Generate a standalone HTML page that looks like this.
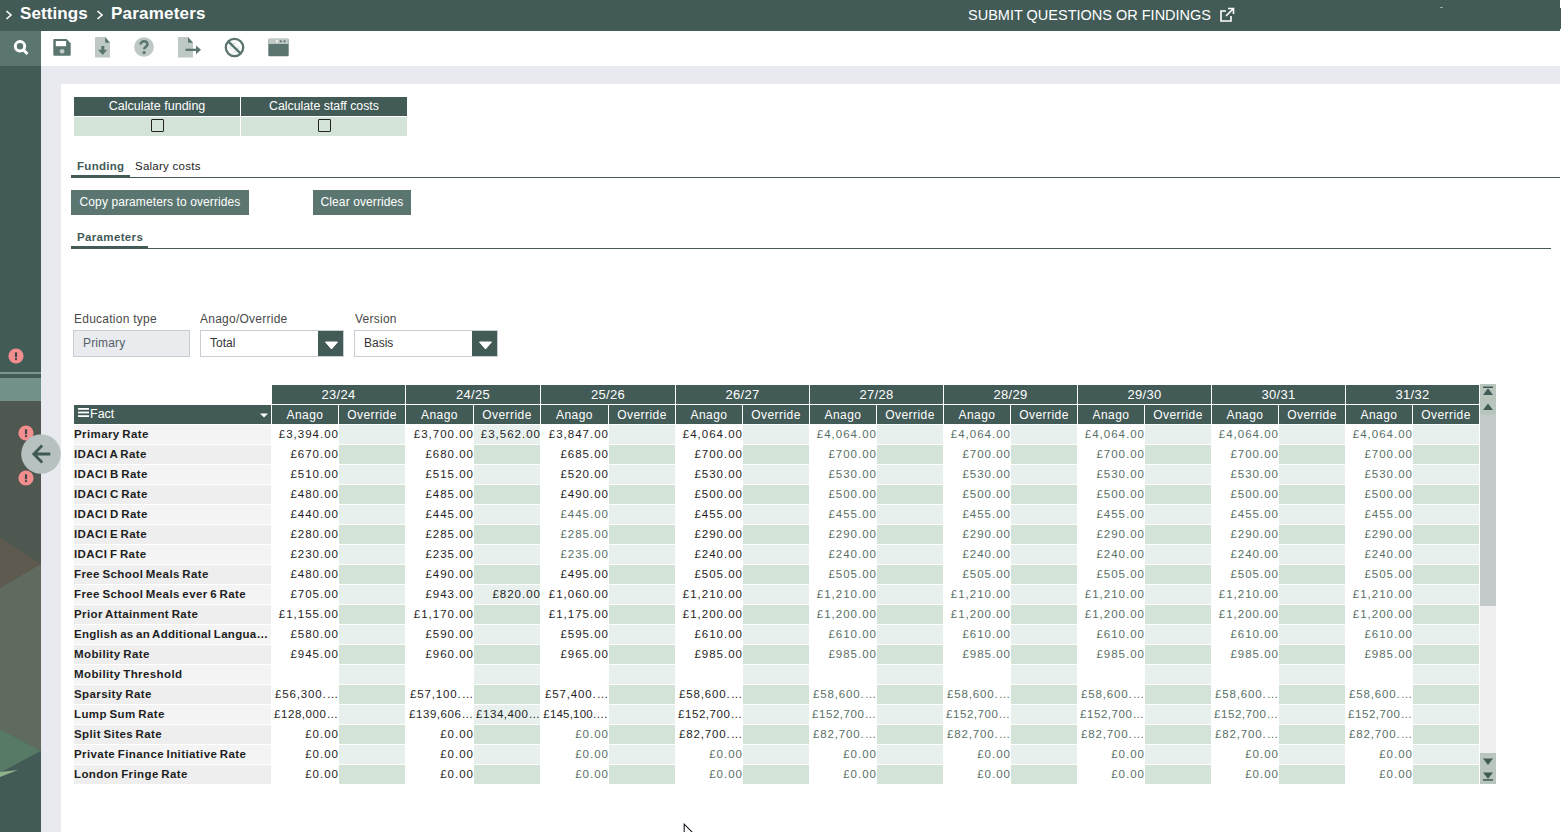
<!DOCTYPE html>
<html><head><meta charset="utf-8"><style>
html,body{margin:0;padding:0;}
body{width:1561px;height:832px;overflow:hidden;position:relative;background:#fff;font-family:"Liberation Sans",sans-serif;}
.abs{position:absolute;}
.hy{position:absolute;left:0;right:0;top:2px;text-align:center;color:#fff;font-size:13px;letter-spacing:0.3px;}
.hs{position:absolute;left:0;right:0;top:3px;text-align:center;color:#fff;font-size:12px;letter-spacing:0.45px;}
.fact{position:absolute;left:0;top:0;right:0;bottom:0;color:#fff;font-size:12.5px;}
.lbl{position:absolute;left:0px;top:3px;font-size:11.5px;letter-spacing:0.4px;word-spacing:-1px;font-weight:bold;color:#1e1e1e;white-space:nowrap;}
.num{position:absolute;right:-1px;top:3px;font-size:11.5px;letter-spacing:1px;white-space:nowrap;}
.btn{position:absolute;background:#5b7670;color:#fff;font-size:12px;text-align:center;line-height:25px;letter-spacing:0.1px;}
.lab{position:absolute;color:#4a4a4a;font-size:12px;letter-spacing:0.25px;}
</style></head><body>
<!-- header -->
<div class="abs" style="left:0;top:0;width:1560px;height:31px;background:#435b57;"></div>
<div class="abs" style="left:1560px;top:8px;width:1px;height:21px;background:#435b57;"></div>
<svg class="abs" style="left:5px;top:10px" width="8" height="10" viewBox="0 0 8 10"><path d="M1.5 1L6 5L1.5 9" stroke="#fff" stroke-width="1.6" fill="none"/></svg>
<div class="abs" style="left:20px;top:4px;color:#fff;font-size:17px;font-weight:bold;letter-spacing:0.1px;">Settings</div>
<svg class="abs" style="left:96px;top:10px" width="8" height="10" viewBox="0 0 8 10"><path d="M1.5 1L6 5L1.5 9" stroke="#fff" stroke-width="1.6" fill="none"/></svg>
<div class="abs" style="left:111px;top:4px;color:#fff;font-size:17px;font-weight:bold;letter-spacing:0.2px;">Parameters</div>
<div class="abs" style="left:968px;top:7px;color:#fff;font-size:14.5px;">SUBMIT QUESTIONS OR FINDINGS</div>
<svg class="abs" style="left:1219px;top:7px" width="16" height="16" viewBox="0 0 16 16"><path d="M12 9v5H2V4h5" stroke="#fff" stroke-width="1.6" fill="none"/><path d="M9 1.5h5.5V7M14.5 1.5L7 9" stroke="#fff" stroke-width="1.6" fill="none"/></svg>
<div class="abs" style="left:1440px;top:7px;width:3px;height:1px;background:#9aa8a5;"></div>

<!-- toolbar -->
<div class="abs" style="left:0;top:31px;width:41px;height:35px;background:#5b7670;"></div>
<svg class="abs" style="left:10px;top:37px" width="22" height="22" viewBox="0 0 22 22"><circle cx="10" cy="9.3" r="4.7" stroke="#fff" stroke-width="3" fill="none"/><path d="M13.5 13L17.5 17" stroke="#fff" stroke-width="3"/></svg>
<!-- save -->
<svg class="abs" style="left:53px;top:39px" width="18" height="17" viewBox="0 0 18 17"><path d="M0.3 1.2Q0.3 0.1 1.3 0.1H13.5L17.7 4.2V15.8Q17.7 16.8 16.7 16.8H1.3Q0.3 16.8 0.3 15.8Z" fill="#5b7670"/><rect x="2.8" y="2" width="10.3" height="5.2" fill="#fff"/><circle cx="9.1" cy="12.3" r="2.4" fill="#bec8c5"/></svg>
<!-- download doc -->
<svg class="abs" style="left:95px;top:37px" width="15" height="21" viewBox="0 0 15 21"><path d="M0 1Q0 0 1 0H10.2L15 5.8V19.5Q15 20.4 14 20.4H1Q0 20.4 0 19.5Z" fill="#bec8c5"/><path d="M10.2 0V5.8H15Z" fill="#5b7670"/><rect x="6.3" y="9" width="3" height="4.5" fill="#5b7670"/><path d="M3 12.8H12.2L7.7 18Z" fill="#5b7670"/></svg>
<!-- help -->
<svg class="abs" style="left:134px;top:37px" width="20" height="20" viewBox="0 0 20 20"><circle cx="10" cy="10" r="9.8" fill="#bec8c5"/><path d="M6.6 7.6C6.6 5.4 8.2 4.3 10.1 4.3C12.2 4.3 13.5 5.6 13.5 7.3C13.5 9.6 10.2 9.8 10.2 12.3" stroke="#5b7670" stroke-width="2.6" fill="none"/><circle cx="10.1" cy="15.6" r="1.6" fill="#5b7670"/></svg>
<!-- export doc -->
<svg class="abs" style="left:178px;top:37px" width="24" height="21" viewBox="0 0 24 21"><path d="M0 1Q0 0 1 0H10L15 5.7V19.6Q15 20.6 14 20.6H1Q0 20.6 0 19.6Z" fill="#bec8c5"/><path d="M10 0V5.7H15Z" fill="#5b7670"/><rect x="7.5" y="11.7" width="11" height="2.3" fill="#5b7670"/><path d="M18 8.6L23 12.85L18 17.3Z" fill="#5b7670"/></svg>
<!-- cancel -->
<svg class="abs" style="left:224px;top:37px" width="21" height="21" viewBox="0 0 21 21"><circle cx="10.5" cy="10.5" r="8.7" stroke="#5b7670" stroke-width="2.3" fill="#fff"/><path d="M12 5.5L10.5 7L9 5.5M9 15.5L10.5 14L12 15.5M13 8.5L15 10.5L13 12.5M8 8.5L6 10.5L8 12.5" stroke="#c9d1ce" stroke-width="1" fill="none"/><path d="M4.8 4.8L16.2 16.2" stroke="#5b7670" stroke-width="2.5"/></svg>
<!-- window -->
<svg class="abs" style="left:268px;top:38px" width="21" height="19" viewBox="0 0 21 19"><rect x="0.3" y="0.8" width="20.4" height="17.4" rx="1.2" fill="#5b7670"/><path d="M0.3 2Q0.3 0.8 1.5 0.8H19.5Q20.7 0.8 20.7 2V6H0.3Z" fill="#bec8c5"/><circle cx="9" cy="3.3" r="1.1" fill="#fff"/><circle cx="12.8" cy="3.3" r="1.1" fill="#5b7670"/><circle cx="16.6" cy="3.3" r="1.1" fill="#5b7670"/></svg>

<!-- gray bands -->
<div class="abs" style="left:41px;top:66px;width:1519px;height:18px;background:#e9eaef;"></div>
<div class="abs" style="left:41px;top:66px;width:20px;height:766px;background:#e9eaef;"></div>

<!-- sidebar -->
<svg class="abs" style="left:0;top:66px" width="41" height="766" viewBox="0 66 41 766">
<rect x="0" y="66" width="41" height="306" fill="#435b57"/>
<rect x="0" y="372" width="41" height="2" fill="#7b9993"/>
<rect x="0" y="374" width="41" height="4" fill="#435b57"/>
<rect x="0" y="378" width="41" height="23" fill="#72918b"/>
<rect x="0" y="401" width="41" height="431" fill="#4f5850"/>
<path d="M0 538L41 564L0 588Z" fill="#5e5a4f"/>
<path d="M0 588L41 564L41 751L0 729Z" fill="#606a5f"/>
<path d="M0 729L41 751L0 773Z" fill="#577a67"/>
<path d="M0 773L41 751L41 832L0 832Z" fill="#435b57"/>
<path d="M0 772L18 770L0 777Z" fill="#8fb08d"/>
</svg>
<svg class="abs" style="left:8px;top:348.4px" width="16" height="16" viewBox="0 0 16 16"><circle cx="8" cy="8" r="7.6" fill="#f38e8e"/><rect x="6.9" y="4.2" width="2.2" height="5" rx="0.5" fill="#3f4a48"/><circle cx="8" cy="11.2" r="1.15" fill="#3f4a48"/></svg>
<svg class="abs" style="left:18.4px;top:424.9px" width="16" height="16" viewBox="0 0 16 16"><circle cx="8" cy="8" r="7.6" fill="#f38e8e"/><rect x="6.9" y="4.2" width="2.2" height="5" rx="0.5" fill="#3f4a48"/><circle cx="8" cy="11.2" r="1.15" fill="#3f4a48"/></svg>
<svg class="abs" style="left:18.4px;top:469.8px" width="16" height="16" viewBox="0 0 16 16"><circle cx="8" cy="8" r="7.6" fill="#f38e8e"/><rect x="6.9" y="4.2" width="2.2" height="5" rx="0.5" fill="#3f4a48"/><circle cx="8" cy="11.2" r="1.15" fill="#3f4a48"/></svg>
<svg class="abs" style="left:21px;top:434px" width="40" height="40" viewBox="0 0 40 40"><circle cx="20" cy="20" r="19.8" fill="#b6c1c0"/><path d="M13 20H29.3M21.2 11.6L12.8 20L21.2 28.4" stroke="#3f5a55" stroke-width="2.8" fill="none"/></svg>

<!-- calc table -->
<div class="abs" style="left:74px;top:97px;width:166px;height:19px;background:#435b57;color:#fff;font-size:12.5px;text-align:center;line-height:19px;">Calculate funding</div>
<div class="abs" style="left:241px;top:97px;width:166px;height:19px;background:#435b57;color:#fff;font-size:12.3px;text-align:center;line-height:19px;">Calculate staff costs</div>
<div class="abs" style="left:74px;top:117px;width:166px;height:19px;background:#d3e3d8;"></div>
<div class="abs" style="left:241px;top:117px;width:166px;height:19px;background:#d3e3d8;"></div>
<div class="abs" style="left:151px;top:119px;width:11px;height:11px;border:1px solid #222;border-radius:1px;"></div>
<div class="abs" style="left:318px;top:119px;width:11px;height:11px;border:1px solid #222;border-radius:1px;"></div>

<!-- tabs -->
<div class="abs" style="left:77px;top:160px;color:#435b57;font-size:11.5px;letter-spacing:0.3px;font-weight:bold;">Funding</div>
<div class="abs" style="left:135px;top:160px;color:#222;font-size:11.5px;letter-spacing:0.25px;">Salary costs</div>
<div class="abs" style="left:71px;top:177px;width:1489px;height:1px;background:#435b57;"></div>
<div class="abs" style="left:71px;top:175px;width:59px;height:3px;background:#435b57;"></div>

<div class="btn" style="left:71px;top:190px;width:178px;height:25px;">Copy parameters to overrides</div>
<div class="btn" style="left:313px;top:190px;width:98px;height:25px;">Clear overrides</div>

<div class="abs" style="left:77px;top:231px;color:#435b57;font-size:11.5px;letter-spacing:0.35px;font-weight:bold;">Parameters</div>
<div class="abs" style="left:71px;top:248px;width:1480px;height:1px;background:#435b57;"></div>
<div class="abs" style="left:71px;top:246px;width:77px;height:3px;background:#435b57;"></div>

<!-- filters -->
<div class="lab" style="left:74px;top:312px;">Education type</div>
<div class="lab" style="left:200px;top:312px;">Anago/Override</div>
<div class="lab" style="left:355px;top:312px;">Version</div>
<div class="abs" style="left:73px;top:330px;width:115px;height:25px;background:#e9ebee;border:1px solid #c8ccd3;"></div>
<div class="abs" style="left:83px;top:336px;color:#565e68;font-size:12px;letter-spacing:0.15px;">Primary</div>
<div class="abs" style="left:200px;top:330px;width:142px;height:25px;background:#fff;border:1px solid #c8ccd3;"></div>
<div class="abs" style="left:318px;top:331px;width:25px;height:25px;background:#435b57;"></div>
<svg class="abs" style="left:325px;top:340.5px" width="13" height="9" viewBox="0 0 13 9"><path d="M0.5 1H12.5L6.5 8Z" fill="#fff" stroke="#fff" stroke-linejoin="round"/></svg>
<div class="abs" style="left:210px;top:336px;color:#333;font-size:12px;">Total</div>
<div class="abs" style="left:354px;top:330px;width:142px;height:25px;background:#fff;border:1px solid #c8ccd3;"></div>
<div class="abs" style="left:472px;top:331px;width:25px;height:25px;background:#435b57;"></div>
<svg class="abs" style="left:479px;top:340.5px" width="13" height="9" viewBox="0 0 13 9"><path d="M0.5 1H12.5L6.5 8Z" fill="#fff" stroke="#fff" stroke-linejoin="round"/></svg>
<div class="abs" style="left:364px;top:336px;color:#333;font-size:12px;">Basis</div>

<!-- table -->
<div style="position:absolute;left:272px;top:385px;width:133px;height:19px;background:#435b57;"><span class="hy">23/24</span></div>
<div style="position:absolute;left:272px;top:405px;width:66px;height:19px;background:#435b57;"><span class="hs">Anago</span></div>
<div style="position:absolute;left:339px;top:405px;width:66px;height:19px;background:#435b57;"><span class="hs">Override</span></div>
<div style="position:absolute;left:406px;top:385px;width:134px;height:19px;background:#435b57;"><span class="hy">24/25</span></div>
<div style="position:absolute;left:406px;top:405px;width:67px;height:19px;background:#435b57;"><span class="hs">Anago</span></div>
<div style="position:absolute;left:474px;top:405px;width:66px;height:19px;background:#435b57;"><span class="hs">Override</span></div>
<div style="position:absolute;left:541px;top:385px;width:134px;height:19px;background:#435b57;"><span class="hy">25/26</span></div>
<div style="position:absolute;left:541px;top:405px;width:67px;height:19px;background:#435b57;"><span class="hs">Anago</span></div>
<div style="position:absolute;left:609px;top:405px;width:66px;height:19px;background:#435b57;"><span class="hs">Override</span></div>
<div style="position:absolute;left:676px;top:385px;width:133px;height:19px;background:#435b57;"><span class="hy">26/27</span></div>
<div style="position:absolute;left:676px;top:405px;width:66px;height:19px;background:#435b57;"><span class="hs">Anago</span></div>
<div style="position:absolute;left:743px;top:405px;width:66px;height:19px;background:#435b57;"><span class="hs">Override</span></div>
<div style="position:absolute;left:810px;top:385px;width:133px;height:19px;background:#435b57;"><span class="hy">27/28</span></div>
<div style="position:absolute;left:810px;top:405px;width:66px;height:19px;background:#435b57;"><span class="hs">Anago</span></div>
<div style="position:absolute;left:877px;top:405px;width:66px;height:19px;background:#435b57;"><span class="hs">Override</span></div>
<div style="position:absolute;left:944px;top:385px;width:133px;height:19px;background:#435b57;"><span class="hy">28/29</span></div>
<div style="position:absolute;left:944px;top:405px;width:66px;height:19px;background:#435b57;"><span class="hs">Anago</span></div>
<div style="position:absolute;left:1011px;top:405px;width:66px;height:19px;background:#435b57;"><span class="hs">Override</span></div>
<div style="position:absolute;left:1078px;top:385px;width:133px;height:19px;background:#435b57;"><span class="hy">29/30</span></div>
<div style="position:absolute;left:1078px;top:405px;width:66px;height:19px;background:#435b57;"><span class="hs">Anago</span></div>
<div style="position:absolute;left:1145px;top:405px;width:66px;height:19px;background:#435b57;"><span class="hs">Override</span></div>
<div style="position:absolute;left:1212px;top:385px;width:133px;height:19px;background:#435b57;"><span class="hy">30/31</span></div>
<div style="position:absolute;left:1212px;top:405px;width:66px;height:19px;background:#435b57;"><span class="hs">Anago</span></div>
<div style="position:absolute;left:1279px;top:405px;width:66px;height:19px;background:#435b57;"><span class="hs">Override</span></div>
<div style="position:absolute;left:1346px;top:385px;width:133px;height:19px;background:#435b57;"><span class="hy">31/32</span></div>
<div style="position:absolute;left:1346px;top:405px;width:66px;height:19px;background:#435b57;"><span class="hs">Anago</span></div>
<div style="position:absolute;left:1413px;top:405px;width:66px;height:19px;background:#435b57;"><span class="hs">Override</span></div>
<div style="position:absolute;left:74px;top:405px;width:197px;height:19px;background:#435b57;"><span class="fact"><svg width="11" height="10" viewBox="0 0 11 10" style="position:absolute;left:4px;top:3.4px"><rect x="0" y="0" width="11" height="1.8" fill="#fff"/><rect x="0" y="3.6" width="11" height="1.8" fill="#fff"/><rect x="0" y="7.2" width="11" height="1.8" fill="#fff"/></svg><span style="position:absolute;left:16px;top:2px">Fact</span><svg width="8" height="5" viewBox="0 0 8 5" style="position:absolute;left:186px;top:8px"><path d="M0 0.5H8L4 4.5Z" fill="#fff"/></svg></span></div>
<div style="position:absolute;left:74px;top:425px;width:197px;height:19px;background:#f4f4f4;"><span class="lbl" style="">Primary Rate</span></div>
<div style="position:absolute;left:272px;top:425px;width:66px;height:19px;"><span class="num" style="color:#1e1e1e;">£3,394.00</span></div>
<div style="position:absolute;left:339px;top:425px;width:66px;height:19px;background:#e7f0ec;"><span class="num" style="color:#1e1e1e;"></span></div>
<div style="position:absolute;left:406px;top:425px;width:67px;height:19px;"><span class="num" style="color:#1e1e1e;">£3,700.00</span></div>
<div style="position:absolute;left:474px;top:425px;width:66px;height:19px;background:#e7f0ec;"><span class="num" style="color:#1e1e1e;">£3,562.00</span></div>
<div style="position:absolute;left:541px;top:425px;width:67px;height:19px;"><span class="num" style="color:#1e1e1e;">£3,847.00</span></div>
<div style="position:absolute;left:609px;top:425px;width:66px;height:19px;background:#e7f0ec;"><span class="num" style="color:#1e1e1e;"></span></div>
<div style="position:absolute;left:676px;top:425px;width:66px;height:19px;"><span class="num" style="color:#1e1e1e;">£4,064.00</span></div>
<div style="position:absolute;left:743px;top:425px;width:66px;height:19px;background:#e7f0ec;"><span class="num" style="color:#1e1e1e;"></span></div>
<div style="position:absolute;left:810px;top:425px;width:66px;height:19px;"><span class="num" style="color:#587066;">£4,064.00</span></div>
<div style="position:absolute;left:877px;top:425px;width:66px;height:19px;background:#e7f0ec;"><span class="num" style="color:#1e1e1e;"></span></div>
<div style="position:absolute;left:944px;top:425px;width:66px;height:19px;"><span class="num" style="color:#587066;">£4,064.00</span></div>
<div style="position:absolute;left:1011px;top:425px;width:66px;height:19px;background:#e7f0ec;"><span class="num" style="color:#1e1e1e;"></span></div>
<div style="position:absolute;left:1078px;top:425px;width:66px;height:19px;"><span class="num" style="color:#587066;">£4,064.00</span></div>
<div style="position:absolute;left:1145px;top:425px;width:66px;height:19px;background:#e7f0ec;"><span class="num" style="color:#1e1e1e;"></span></div>
<div style="position:absolute;left:1212px;top:425px;width:66px;height:19px;"><span class="num" style="color:#587066;">£4,064.00</span></div>
<div style="position:absolute;left:1279px;top:425px;width:66px;height:19px;background:#e7f0ec;"><span class="num" style="color:#1e1e1e;"></span></div>
<div style="position:absolute;left:1346px;top:425px;width:66px;height:19px;"><span class="num" style="color:#587066;">£4,064.00</span></div>
<div style="position:absolute;left:1413px;top:425px;width:66px;height:19px;background:#e7f0ec;"><span class="num" style="color:#1e1e1e;"></span></div>
<div style="position:absolute;left:74px;top:445px;width:197px;height:19px;background:#eeeeee;"><span class="lbl" style="">IDACI A Rate</span></div>
<div style="position:absolute;left:272px;top:445px;width:66px;height:19px;"><span class="num" style="color:#1e1e1e;">£670.00</span></div>
<div style="position:absolute;left:339px;top:445px;width:66px;height:19px;background:#d3e3d8;"><span class="num" style="color:#1e1e1e;"></span></div>
<div style="position:absolute;left:406px;top:445px;width:67px;height:19px;"><span class="num" style="color:#1e1e1e;">£680.00</span></div>
<div style="position:absolute;left:474px;top:445px;width:66px;height:19px;background:#d3e3d8;"><span class="num" style="color:#1e1e1e;"></span></div>
<div style="position:absolute;left:541px;top:445px;width:67px;height:19px;"><span class="num" style="color:#1e1e1e;">£685.00</span></div>
<div style="position:absolute;left:609px;top:445px;width:66px;height:19px;background:#d3e3d8;"><span class="num" style="color:#1e1e1e;"></span></div>
<div style="position:absolute;left:676px;top:445px;width:66px;height:19px;"><span class="num" style="color:#1e1e1e;">£700.00</span></div>
<div style="position:absolute;left:743px;top:445px;width:66px;height:19px;background:#d3e3d8;"><span class="num" style="color:#1e1e1e;"></span></div>
<div style="position:absolute;left:810px;top:445px;width:66px;height:19px;"><span class="num" style="color:#587066;">£700.00</span></div>
<div style="position:absolute;left:877px;top:445px;width:66px;height:19px;background:#d3e3d8;"><span class="num" style="color:#1e1e1e;"></span></div>
<div style="position:absolute;left:944px;top:445px;width:66px;height:19px;"><span class="num" style="color:#587066;">£700.00</span></div>
<div style="position:absolute;left:1011px;top:445px;width:66px;height:19px;background:#d3e3d8;"><span class="num" style="color:#1e1e1e;"></span></div>
<div style="position:absolute;left:1078px;top:445px;width:66px;height:19px;"><span class="num" style="color:#587066;">£700.00</span></div>
<div style="position:absolute;left:1145px;top:445px;width:66px;height:19px;background:#d3e3d8;"><span class="num" style="color:#1e1e1e;"></span></div>
<div style="position:absolute;left:1212px;top:445px;width:66px;height:19px;"><span class="num" style="color:#587066;">£700.00</span></div>
<div style="position:absolute;left:1279px;top:445px;width:66px;height:19px;background:#d3e3d8;"><span class="num" style="color:#1e1e1e;"></span></div>
<div style="position:absolute;left:1346px;top:445px;width:66px;height:19px;"><span class="num" style="color:#587066;">£700.00</span></div>
<div style="position:absolute;left:1413px;top:445px;width:66px;height:19px;background:#d3e3d8;"><span class="num" style="color:#1e1e1e;"></span></div>
<div style="position:absolute;left:74px;top:465px;width:197px;height:19px;background:#f4f4f4;"><span class="lbl" style="">IDACI B Rate</span></div>
<div style="position:absolute;left:272px;top:465px;width:66px;height:19px;"><span class="num" style="color:#1e1e1e;">£510.00</span></div>
<div style="position:absolute;left:339px;top:465px;width:66px;height:19px;background:#e7f0ec;"><span class="num" style="color:#1e1e1e;"></span></div>
<div style="position:absolute;left:406px;top:465px;width:67px;height:19px;"><span class="num" style="color:#1e1e1e;">£515.00</span></div>
<div style="position:absolute;left:474px;top:465px;width:66px;height:19px;background:#e7f0ec;"><span class="num" style="color:#1e1e1e;"></span></div>
<div style="position:absolute;left:541px;top:465px;width:67px;height:19px;"><span class="num" style="color:#1e1e1e;">£520.00</span></div>
<div style="position:absolute;left:609px;top:465px;width:66px;height:19px;background:#e7f0ec;"><span class="num" style="color:#1e1e1e;"></span></div>
<div style="position:absolute;left:676px;top:465px;width:66px;height:19px;"><span class="num" style="color:#1e1e1e;">£530.00</span></div>
<div style="position:absolute;left:743px;top:465px;width:66px;height:19px;background:#e7f0ec;"><span class="num" style="color:#1e1e1e;"></span></div>
<div style="position:absolute;left:810px;top:465px;width:66px;height:19px;"><span class="num" style="color:#587066;">£530.00</span></div>
<div style="position:absolute;left:877px;top:465px;width:66px;height:19px;background:#e7f0ec;"><span class="num" style="color:#1e1e1e;"></span></div>
<div style="position:absolute;left:944px;top:465px;width:66px;height:19px;"><span class="num" style="color:#587066;">£530.00</span></div>
<div style="position:absolute;left:1011px;top:465px;width:66px;height:19px;background:#e7f0ec;"><span class="num" style="color:#1e1e1e;"></span></div>
<div style="position:absolute;left:1078px;top:465px;width:66px;height:19px;"><span class="num" style="color:#587066;">£530.00</span></div>
<div style="position:absolute;left:1145px;top:465px;width:66px;height:19px;background:#e7f0ec;"><span class="num" style="color:#1e1e1e;"></span></div>
<div style="position:absolute;left:1212px;top:465px;width:66px;height:19px;"><span class="num" style="color:#587066;">£530.00</span></div>
<div style="position:absolute;left:1279px;top:465px;width:66px;height:19px;background:#e7f0ec;"><span class="num" style="color:#1e1e1e;"></span></div>
<div style="position:absolute;left:1346px;top:465px;width:66px;height:19px;"><span class="num" style="color:#587066;">£530.00</span></div>
<div style="position:absolute;left:1413px;top:465px;width:66px;height:19px;background:#e7f0ec;"><span class="num" style="color:#1e1e1e;"></span></div>
<div style="position:absolute;left:74px;top:485px;width:197px;height:19px;background:#eeeeee;"><span class="lbl" style="">IDACI C Rate</span></div>
<div style="position:absolute;left:272px;top:485px;width:66px;height:19px;"><span class="num" style="color:#1e1e1e;">£480.00</span></div>
<div style="position:absolute;left:339px;top:485px;width:66px;height:19px;background:#d3e3d8;"><span class="num" style="color:#1e1e1e;"></span></div>
<div style="position:absolute;left:406px;top:485px;width:67px;height:19px;"><span class="num" style="color:#1e1e1e;">£485.00</span></div>
<div style="position:absolute;left:474px;top:485px;width:66px;height:19px;background:#d3e3d8;"><span class="num" style="color:#1e1e1e;"></span></div>
<div style="position:absolute;left:541px;top:485px;width:67px;height:19px;"><span class="num" style="color:#1e1e1e;">£490.00</span></div>
<div style="position:absolute;left:609px;top:485px;width:66px;height:19px;background:#d3e3d8;"><span class="num" style="color:#1e1e1e;"></span></div>
<div style="position:absolute;left:676px;top:485px;width:66px;height:19px;"><span class="num" style="color:#1e1e1e;">£500.00</span></div>
<div style="position:absolute;left:743px;top:485px;width:66px;height:19px;background:#d3e3d8;"><span class="num" style="color:#1e1e1e;"></span></div>
<div style="position:absolute;left:810px;top:485px;width:66px;height:19px;"><span class="num" style="color:#587066;">£500.00</span></div>
<div style="position:absolute;left:877px;top:485px;width:66px;height:19px;background:#d3e3d8;"><span class="num" style="color:#1e1e1e;"></span></div>
<div style="position:absolute;left:944px;top:485px;width:66px;height:19px;"><span class="num" style="color:#587066;">£500.00</span></div>
<div style="position:absolute;left:1011px;top:485px;width:66px;height:19px;background:#d3e3d8;"><span class="num" style="color:#1e1e1e;"></span></div>
<div style="position:absolute;left:1078px;top:485px;width:66px;height:19px;"><span class="num" style="color:#587066;">£500.00</span></div>
<div style="position:absolute;left:1145px;top:485px;width:66px;height:19px;background:#d3e3d8;"><span class="num" style="color:#1e1e1e;"></span></div>
<div style="position:absolute;left:1212px;top:485px;width:66px;height:19px;"><span class="num" style="color:#587066;">£500.00</span></div>
<div style="position:absolute;left:1279px;top:485px;width:66px;height:19px;background:#d3e3d8;"><span class="num" style="color:#1e1e1e;"></span></div>
<div style="position:absolute;left:1346px;top:485px;width:66px;height:19px;"><span class="num" style="color:#587066;">£500.00</span></div>
<div style="position:absolute;left:1413px;top:485px;width:66px;height:19px;background:#d3e3d8;"><span class="num" style="color:#1e1e1e;"></span></div>
<div style="position:absolute;left:74px;top:505px;width:197px;height:19px;background:#f4f4f4;"><span class="lbl" style="">IDACI D Rate</span></div>
<div style="position:absolute;left:272px;top:505px;width:66px;height:19px;"><span class="num" style="color:#1e1e1e;">£440.00</span></div>
<div style="position:absolute;left:339px;top:505px;width:66px;height:19px;background:#e7f0ec;"><span class="num" style="color:#1e1e1e;"></span></div>
<div style="position:absolute;left:406px;top:505px;width:67px;height:19px;"><span class="num" style="color:#1e1e1e;">£445.00</span></div>
<div style="position:absolute;left:474px;top:505px;width:66px;height:19px;background:#e7f0ec;"><span class="num" style="color:#1e1e1e;"></span></div>
<div style="position:absolute;left:541px;top:505px;width:67px;height:19px;"><span class="num" style="color:#587066;">£445.00</span></div>
<div style="position:absolute;left:609px;top:505px;width:66px;height:19px;background:#e7f0ec;"><span class="num" style="color:#1e1e1e;"></span></div>
<div style="position:absolute;left:676px;top:505px;width:66px;height:19px;"><span class="num" style="color:#1e1e1e;">£455.00</span></div>
<div style="position:absolute;left:743px;top:505px;width:66px;height:19px;background:#e7f0ec;"><span class="num" style="color:#1e1e1e;"></span></div>
<div style="position:absolute;left:810px;top:505px;width:66px;height:19px;"><span class="num" style="color:#587066;">£455.00</span></div>
<div style="position:absolute;left:877px;top:505px;width:66px;height:19px;background:#e7f0ec;"><span class="num" style="color:#1e1e1e;"></span></div>
<div style="position:absolute;left:944px;top:505px;width:66px;height:19px;"><span class="num" style="color:#587066;">£455.00</span></div>
<div style="position:absolute;left:1011px;top:505px;width:66px;height:19px;background:#e7f0ec;"><span class="num" style="color:#1e1e1e;"></span></div>
<div style="position:absolute;left:1078px;top:505px;width:66px;height:19px;"><span class="num" style="color:#587066;">£455.00</span></div>
<div style="position:absolute;left:1145px;top:505px;width:66px;height:19px;background:#e7f0ec;"><span class="num" style="color:#1e1e1e;"></span></div>
<div style="position:absolute;left:1212px;top:505px;width:66px;height:19px;"><span class="num" style="color:#587066;">£455.00</span></div>
<div style="position:absolute;left:1279px;top:505px;width:66px;height:19px;background:#e7f0ec;"><span class="num" style="color:#1e1e1e;"></span></div>
<div style="position:absolute;left:1346px;top:505px;width:66px;height:19px;"><span class="num" style="color:#587066;">£455.00</span></div>
<div style="position:absolute;left:1413px;top:505px;width:66px;height:19px;background:#e7f0ec;"><span class="num" style="color:#1e1e1e;"></span></div>
<div style="position:absolute;left:74px;top:525px;width:197px;height:19px;background:#eeeeee;"><span class="lbl" style="">IDACI E Rate</span></div>
<div style="position:absolute;left:272px;top:525px;width:66px;height:19px;"><span class="num" style="color:#1e1e1e;">£280.00</span></div>
<div style="position:absolute;left:339px;top:525px;width:66px;height:19px;background:#d3e3d8;"><span class="num" style="color:#1e1e1e;"></span></div>
<div style="position:absolute;left:406px;top:525px;width:67px;height:19px;"><span class="num" style="color:#1e1e1e;">£285.00</span></div>
<div style="position:absolute;left:474px;top:525px;width:66px;height:19px;background:#d3e3d8;"><span class="num" style="color:#1e1e1e;"></span></div>
<div style="position:absolute;left:541px;top:525px;width:67px;height:19px;"><span class="num" style="color:#587066;">£285.00</span></div>
<div style="position:absolute;left:609px;top:525px;width:66px;height:19px;background:#d3e3d8;"><span class="num" style="color:#1e1e1e;"></span></div>
<div style="position:absolute;left:676px;top:525px;width:66px;height:19px;"><span class="num" style="color:#1e1e1e;">£290.00</span></div>
<div style="position:absolute;left:743px;top:525px;width:66px;height:19px;background:#d3e3d8;"><span class="num" style="color:#1e1e1e;"></span></div>
<div style="position:absolute;left:810px;top:525px;width:66px;height:19px;"><span class="num" style="color:#587066;">£290.00</span></div>
<div style="position:absolute;left:877px;top:525px;width:66px;height:19px;background:#d3e3d8;"><span class="num" style="color:#1e1e1e;"></span></div>
<div style="position:absolute;left:944px;top:525px;width:66px;height:19px;"><span class="num" style="color:#587066;">£290.00</span></div>
<div style="position:absolute;left:1011px;top:525px;width:66px;height:19px;background:#d3e3d8;"><span class="num" style="color:#1e1e1e;"></span></div>
<div style="position:absolute;left:1078px;top:525px;width:66px;height:19px;"><span class="num" style="color:#587066;">£290.00</span></div>
<div style="position:absolute;left:1145px;top:525px;width:66px;height:19px;background:#d3e3d8;"><span class="num" style="color:#1e1e1e;"></span></div>
<div style="position:absolute;left:1212px;top:525px;width:66px;height:19px;"><span class="num" style="color:#587066;">£290.00</span></div>
<div style="position:absolute;left:1279px;top:525px;width:66px;height:19px;background:#d3e3d8;"><span class="num" style="color:#1e1e1e;"></span></div>
<div style="position:absolute;left:1346px;top:525px;width:66px;height:19px;"><span class="num" style="color:#587066;">£290.00</span></div>
<div style="position:absolute;left:1413px;top:525px;width:66px;height:19px;background:#d3e3d8;"><span class="num" style="color:#1e1e1e;"></span></div>
<div style="position:absolute;left:74px;top:545px;width:197px;height:19px;background:#f4f4f4;"><span class="lbl" style="">IDACI F Rate</span></div>
<div style="position:absolute;left:272px;top:545px;width:66px;height:19px;"><span class="num" style="color:#1e1e1e;">£230.00</span></div>
<div style="position:absolute;left:339px;top:545px;width:66px;height:19px;background:#e7f0ec;"><span class="num" style="color:#1e1e1e;"></span></div>
<div style="position:absolute;left:406px;top:545px;width:67px;height:19px;"><span class="num" style="color:#1e1e1e;">£235.00</span></div>
<div style="position:absolute;left:474px;top:545px;width:66px;height:19px;background:#e7f0ec;"><span class="num" style="color:#1e1e1e;"></span></div>
<div style="position:absolute;left:541px;top:545px;width:67px;height:19px;"><span class="num" style="color:#587066;">£235.00</span></div>
<div style="position:absolute;left:609px;top:545px;width:66px;height:19px;background:#e7f0ec;"><span class="num" style="color:#1e1e1e;"></span></div>
<div style="position:absolute;left:676px;top:545px;width:66px;height:19px;"><span class="num" style="color:#1e1e1e;">£240.00</span></div>
<div style="position:absolute;left:743px;top:545px;width:66px;height:19px;background:#e7f0ec;"><span class="num" style="color:#1e1e1e;"></span></div>
<div style="position:absolute;left:810px;top:545px;width:66px;height:19px;"><span class="num" style="color:#587066;">£240.00</span></div>
<div style="position:absolute;left:877px;top:545px;width:66px;height:19px;background:#e7f0ec;"><span class="num" style="color:#1e1e1e;"></span></div>
<div style="position:absolute;left:944px;top:545px;width:66px;height:19px;"><span class="num" style="color:#587066;">£240.00</span></div>
<div style="position:absolute;left:1011px;top:545px;width:66px;height:19px;background:#e7f0ec;"><span class="num" style="color:#1e1e1e;"></span></div>
<div style="position:absolute;left:1078px;top:545px;width:66px;height:19px;"><span class="num" style="color:#587066;">£240.00</span></div>
<div style="position:absolute;left:1145px;top:545px;width:66px;height:19px;background:#e7f0ec;"><span class="num" style="color:#1e1e1e;"></span></div>
<div style="position:absolute;left:1212px;top:545px;width:66px;height:19px;"><span class="num" style="color:#587066;">£240.00</span></div>
<div style="position:absolute;left:1279px;top:545px;width:66px;height:19px;background:#e7f0ec;"><span class="num" style="color:#1e1e1e;"></span></div>
<div style="position:absolute;left:1346px;top:545px;width:66px;height:19px;"><span class="num" style="color:#587066;">£240.00</span></div>
<div style="position:absolute;left:1413px;top:545px;width:66px;height:19px;background:#e7f0ec;"><span class="num" style="color:#1e1e1e;"></span></div>
<div style="position:absolute;left:74px;top:565px;width:197px;height:19px;background:#eeeeee;"><span class="lbl" style="">Free School Meals Rate</span></div>
<div style="position:absolute;left:272px;top:565px;width:66px;height:19px;"><span class="num" style="color:#1e1e1e;">£480.00</span></div>
<div style="position:absolute;left:339px;top:565px;width:66px;height:19px;background:#d3e3d8;"><span class="num" style="color:#1e1e1e;"></span></div>
<div style="position:absolute;left:406px;top:565px;width:67px;height:19px;"><span class="num" style="color:#1e1e1e;">£490.00</span></div>
<div style="position:absolute;left:474px;top:565px;width:66px;height:19px;background:#d3e3d8;"><span class="num" style="color:#1e1e1e;"></span></div>
<div style="position:absolute;left:541px;top:565px;width:67px;height:19px;"><span class="num" style="color:#1e1e1e;">£495.00</span></div>
<div style="position:absolute;left:609px;top:565px;width:66px;height:19px;background:#d3e3d8;"><span class="num" style="color:#1e1e1e;"></span></div>
<div style="position:absolute;left:676px;top:565px;width:66px;height:19px;"><span class="num" style="color:#1e1e1e;">£505.00</span></div>
<div style="position:absolute;left:743px;top:565px;width:66px;height:19px;background:#d3e3d8;"><span class="num" style="color:#1e1e1e;"></span></div>
<div style="position:absolute;left:810px;top:565px;width:66px;height:19px;"><span class="num" style="color:#587066;">£505.00</span></div>
<div style="position:absolute;left:877px;top:565px;width:66px;height:19px;background:#d3e3d8;"><span class="num" style="color:#1e1e1e;"></span></div>
<div style="position:absolute;left:944px;top:565px;width:66px;height:19px;"><span class="num" style="color:#587066;">£505.00</span></div>
<div style="position:absolute;left:1011px;top:565px;width:66px;height:19px;background:#d3e3d8;"><span class="num" style="color:#1e1e1e;"></span></div>
<div style="position:absolute;left:1078px;top:565px;width:66px;height:19px;"><span class="num" style="color:#587066;">£505.00</span></div>
<div style="position:absolute;left:1145px;top:565px;width:66px;height:19px;background:#d3e3d8;"><span class="num" style="color:#1e1e1e;"></span></div>
<div style="position:absolute;left:1212px;top:565px;width:66px;height:19px;"><span class="num" style="color:#587066;">£505.00</span></div>
<div style="position:absolute;left:1279px;top:565px;width:66px;height:19px;background:#d3e3d8;"><span class="num" style="color:#1e1e1e;"></span></div>
<div style="position:absolute;left:1346px;top:565px;width:66px;height:19px;"><span class="num" style="color:#587066;">£505.00</span></div>
<div style="position:absolute;left:1413px;top:565px;width:66px;height:19px;background:#d3e3d8;"><span class="num" style="color:#1e1e1e;"></span></div>
<div style="position:absolute;left:74px;top:585px;width:197px;height:19px;background:#f4f4f4;"><span class="lbl" style="">Free School Meals ever 6 Rate</span></div>
<div style="position:absolute;left:272px;top:585px;width:66px;height:19px;"><span class="num" style="color:#1e1e1e;">£705.00</span></div>
<div style="position:absolute;left:339px;top:585px;width:66px;height:19px;background:#e7f0ec;"><span class="num" style="color:#1e1e1e;"></span></div>
<div style="position:absolute;left:406px;top:585px;width:67px;height:19px;"><span class="num" style="color:#1e1e1e;">£943.00</span></div>
<div style="position:absolute;left:474px;top:585px;width:66px;height:19px;background:#e7f0ec;"><span class="num" style="color:#1e1e1e;">£820.00</span></div>
<div style="position:absolute;left:541px;top:585px;width:67px;height:19px;"><span class="num" style="color:#1e1e1e;">£1,060.00</span></div>
<div style="position:absolute;left:609px;top:585px;width:66px;height:19px;background:#e7f0ec;"><span class="num" style="color:#1e1e1e;"></span></div>
<div style="position:absolute;left:676px;top:585px;width:66px;height:19px;"><span class="num" style="color:#1e1e1e;">£1,210.00</span></div>
<div style="position:absolute;left:743px;top:585px;width:66px;height:19px;background:#e7f0ec;"><span class="num" style="color:#1e1e1e;"></span></div>
<div style="position:absolute;left:810px;top:585px;width:66px;height:19px;"><span class="num" style="color:#587066;">£1,210.00</span></div>
<div style="position:absolute;left:877px;top:585px;width:66px;height:19px;background:#e7f0ec;"><span class="num" style="color:#1e1e1e;"></span></div>
<div style="position:absolute;left:944px;top:585px;width:66px;height:19px;"><span class="num" style="color:#587066;">£1,210.00</span></div>
<div style="position:absolute;left:1011px;top:585px;width:66px;height:19px;background:#e7f0ec;"><span class="num" style="color:#1e1e1e;"></span></div>
<div style="position:absolute;left:1078px;top:585px;width:66px;height:19px;"><span class="num" style="color:#587066;">£1,210.00</span></div>
<div style="position:absolute;left:1145px;top:585px;width:66px;height:19px;background:#e7f0ec;"><span class="num" style="color:#1e1e1e;"></span></div>
<div style="position:absolute;left:1212px;top:585px;width:66px;height:19px;"><span class="num" style="color:#587066;">£1,210.00</span></div>
<div style="position:absolute;left:1279px;top:585px;width:66px;height:19px;background:#e7f0ec;"><span class="num" style="color:#1e1e1e;"></span></div>
<div style="position:absolute;left:1346px;top:585px;width:66px;height:19px;"><span class="num" style="color:#587066;">£1,210.00</span></div>
<div style="position:absolute;left:1413px;top:585px;width:66px;height:19px;background:#e7f0ec;"><span class="num" style="color:#1e1e1e;"></span></div>
<div style="position:absolute;left:74px;top:605px;width:197px;height:19px;background:#eeeeee;"><span class="lbl" style="">Prior Attainment Rate</span></div>
<div style="position:absolute;left:272px;top:605px;width:66px;height:19px;"><span class="num" style="color:#1e1e1e;">£1,155.00</span></div>
<div style="position:absolute;left:339px;top:605px;width:66px;height:19px;background:#d3e3d8;"><span class="num" style="color:#1e1e1e;"></span></div>
<div style="position:absolute;left:406px;top:605px;width:67px;height:19px;"><span class="num" style="color:#1e1e1e;">£1,170.00</span></div>
<div style="position:absolute;left:474px;top:605px;width:66px;height:19px;background:#d3e3d8;"><span class="num" style="color:#1e1e1e;"></span></div>
<div style="position:absolute;left:541px;top:605px;width:67px;height:19px;"><span class="num" style="color:#1e1e1e;">£1,175.00</span></div>
<div style="position:absolute;left:609px;top:605px;width:66px;height:19px;background:#d3e3d8;"><span class="num" style="color:#1e1e1e;"></span></div>
<div style="position:absolute;left:676px;top:605px;width:66px;height:19px;"><span class="num" style="color:#1e1e1e;">£1,200.00</span></div>
<div style="position:absolute;left:743px;top:605px;width:66px;height:19px;background:#d3e3d8;"><span class="num" style="color:#1e1e1e;"></span></div>
<div style="position:absolute;left:810px;top:605px;width:66px;height:19px;"><span class="num" style="color:#587066;">£1,200.00</span></div>
<div style="position:absolute;left:877px;top:605px;width:66px;height:19px;background:#d3e3d8;"><span class="num" style="color:#1e1e1e;"></span></div>
<div style="position:absolute;left:944px;top:605px;width:66px;height:19px;"><span class="num" style="color:#587066;">£1,200.00</span></div>
<div style="position:absolute;left:1011px;top:605px;width:66px;height:19px;background:#d3e3d8;"><span class="num" style="color:#1e1e1e;"></span></div>
<div style="position:absolute;left:1078px;top:605px;width:66px;height:19px;"><span class="num" style="color:#587066;">£1,200.00</span></div>
<div style="position:absolute;left:1145px;top:605px;width:66px;height:19px;background:#d3e3d8;"><span class="num" style="color:#1e1e1e;"></span></div>
<div style="position:absolute;left:1212px;top:605px;width:66px;height:19px;"><span class="num" style="color:#587066;">£1,200.00</span></div>
<div style="position:absolute;left:1279px;top:605px;width:66px;height:19px;background:#d3e3d8;"><span class="num" style="color:#1e1e1e;"></span></div>
<div style="position:absolute;left:1346px;top:605px;width:66px;height:19px;"><span class="num" style="color:#587066;">£1,200.00</span></div>
<div style="position:absolute;left:1413px;top:605px;width:66px;height:19px;background:#d3e3d8;"><span class="num" style="color:#1e1e1e;"></span></div>
<div style="position:absolute;left:74px;top:625px;width:197px;height:19px;background:#f4f4f4;"><span class="lbl" style="letter-spacing:0.3px;">English as an Additional Langua…</span></div>
<div style="position:absolute;left:272px;top:625px;width:66px;height:19px;"><span class="num" style="color:#1e1e1e;">£580.00</span></div>
<div style="position:absolute;left:339px;top:625px;width:66px;height:19px;background:#e7f0ec;"><span class="num" style="color:#1e1e1e;"></span></div>
<div style="position:absolute;left:406px;top:625px;width:67px;height:19px;"><span class="num" style="color:#1e1e1e;">£590.00</span></div>
<div style="position:absolute;left:474px;top:625px;width:66px;height:19px;background:#e7f0ec;"><span class="num" style="color:#1e1e1e;"></span></div>
<div style="position:absolute;left:541px;top:625px;width:67px;height:19px;"><span class="num" style="color:#1e1e1e;">£595.00</span></div>
<div style="position:absolute;left:609px;top:625px;width:66px;height:19px;background:#e7f0ec;"><span class="num" style="color:#1e1e1e;"></span></div>
<div style="position:absolute;left:676px;top:625px;width:66px;height:19px;"><span class="num" style="color:#1e1e1e;">£610.00</span></div>
<div style="position:absolute;left:743px;top:625px;width:66px;height:19px;background:#e7f0ec;"><span class="num" style="color:#1e1e1e;"></span></div>
<div style="position:absolute;left:810px;top:625px;width:66px;height:19px;"><span class="num" style="color:#587066;">£610.00</span></div>
<div style="position:absolute;left:877px;top:625px;width:66px;height:19px;background:#e7f0ec;"><span class="num" style="color:#1e1e1e;"></span></div>
<div style="position:absolute;left:944px;top:625px;width:66px;height:19px;"><span class="num" style="color:#587066;">£610.00</span></div>
<div style="position:absolute;left:1011px;top:625px;width:66px;height:19px;background:#e7f0ec;"><span class="num" style="color:#1e1e1e;"></span></div>
<div style="position:absolute;left:1078px;top:625px;width:66px;height:19px;"><span class="num" style="color:#587066;">£610.00</span></div>
<div style="position:absolute;left:1145px;top:625px;width:66px;height:19px;background:#e7f0ec;"><span class="num" style="color:#1e1e1e;"></span></div>
<div style="position:absolute;left:1212px;top:625px;width:66px;height:19px;"><span class="num" style="color:#587066;">£610.00</span></div>
<div style="position:absolute;left:1279px;top:625px;width:66px;height:19px;background:#e7f0ec;"><span class="num" style="color:#1e1e1e;"></span></div>
<div style="position:absolute;left:1346px;top:625px;width:66px;height:19px;"><span class="num" style="color:#587066;">£610.00</span></div>
<div style="position:absolute;left:1413px;top:625px;width:66px;height:19px;background:#e7f0ec;"><span class="num" style="color:#1e1e1e;"></span></div>
<div style="position:absolute;left:74px;top:645px;width:197px;height:19px;background:#eeeeee;"><span class="lbl" style="">Mobility Rate</span></div>
<div style="position:absolute;left:272px;top:645px;width:66px;height:19px;"><span class="num" style="color:#1e1e1e;">£945.00</span></div>
<div style="position:absolute;left:339px;top:645px;width:66px;height:19px;background:#d3e3d8;"><span class="num" style="color:#1e1e1e;"></span></div>
<div style="position:absolute;left:406px;top:645px;width:67px;height:19px;"><span class="num" style="color:#1e1e1e;">£960.00</span></div>
<div style="position:absolute;left:474px;top:645px;width:66px;height:19px;background:#d3e3d8;"><span class="num" style="color:#1e1e1e;"></span></div>
<div style="position:absolute;left:541px;top:645px;width:67px;height:19px;"><span class="num" style="color:#1e1e1e;">£965.00</span></div>
<div style="position:absolute;left:609px;top:645px;width:66px;height:19px;background:#d3e3d8;"><span class="num" style="color:#1e1e1e;"></span></div>
<div style="position:absolute;left:676px;top:645px;width:66px;height:19px;"><span class="num" style="color:#1e1e1e;">£985.00</span></div>
<div style="position:absolute;left:743px;top:645px;width:66px;height:19px;background:#d3e3d8;"><span class="num" style="color:#1e1e1e;"></span></div>
<div style="position:absolute;left:810px;top:645px;width:66px;height:19px;"><span class="num" style="color:#587066;">£985.00</span></div>
<div style="position:absolute;left:877px;top:645px;width:66px;height:19px;background:#d3e3d8;"><span class="num" style="color:#1e1e1e;"></span></div>
<div style="position:absolute;left:944px;top:645px;width:66px;height:19px;"><span class="num" style="color:#587066;">£985.00</span></div>
<div style="position:absolute;left:1011px;top:645px;width:66px;height:19px;background:#d3e3d8;"><span class="num" style="color:#1e1e1e;"></span></div>
<div style="position:absolute;left:1078px;top:645px;width:66px;height:19px;"><span class="num" style="color:#587066;">£985.00</span></div>
<div style="position:absolute;left:1145px;top:645px;width:66px;height:19px;background:#d3e3d8;"><span class="num" style="color:#1e1e1e;"></span></div>
<div style="position:absolute;left:1212px;top:645px;width:66px;height:19px;"><span class="num" style="color:#587066;">£985.00</span></div>
<div style="position:absolute;left:1279px;top:645px;width:66px;height:19px;background:#d3e3d8;"><span class="num" style="color:#1e1e1e;"></span></div>
<div style="position:absolute;left:1346px;top:645px;width:66px;height:19px;"><span class="num" style="color:#587066;">£985.00</span></div>
<div style="position:absolute;left:1413px;top:645px;width:66px;height:19px;background:#d3e3d8;"><span class="num" style="color:#1e1e1e;"></span></div>
<div style="position:absolute;left:74px;top:665px;width:197px;height:19px;background:#f4f4f4;"><span class="lbl" style="">Mobility Threshold</span></div>
<div style="position:absolute;left:272px;top:665px;width:66px;height:19px;"><span class="num" style="color:#1e1e1e;"></span></div>
<div style="position:absolute;left:339px;top:665px;width:66px;height:19px;background:#e7f0ec;"><span class="num" style="color:#1e1e1e;"></span></div>
<div style="position:absolute;left:406px;top:665px;width:67px;height:19px;"><span class="num" style="color:#1e1e1e;"></span></div>
<div style="position:absolute;left:474px;top:665px;width:66px;height:19px;background:#e7f0ec;"><span class="num" style="color:#1e1e1e;"></span></div>
<div style="position:absolute;left:541px;top:665px;width:67px;height:19px;"><span class="num" style="color:#1e1e1e;"></span></div>
<div style="position:absolute;left:609px;top:665px;width:66px;height:19px;background:#e7f0ec;"><span class="num" style="color:#1e1e1e;"></span></div>
<div style="position:absolute;left:676px;top:665px;width:66px;height:19px;"><span class="num" style="color:#1e1e1e;"></span></div>
<div style="position:absolute;left:743px;top:665px;width:66px;height:19px;background:#e7f0ec;"><span class="num" style="color:#1e1e1e;"></span></div>
<div style="position:absolute;left:810px;top:665px;width:66px;height:19px;"><span class="num" style="color:#587066;"></span></div>
<div style="position:absolute;left:877px;top:665px;width:66px;height:19px;background:#e7f0ec;"><span class="num" style="color:#1e1e1e;"></span></div>
<div style="position:absolute;left:944px;top:665px;width:66px;height:19px;"><span class="num" style="color:#587066;"></span></div>
<div style="position:absolute;left:1011px;top:665px;width:66px;height:19px;background:#e7f0ec;"><span class="num" style="color:#1e1e1e;"></span></div>
<div style="position:absolute;left:1078px;top:665px;width:66px;height:19px;"><span class="num" style="color:#587066;"></span></div>
<div style="position:absolute;left:1145px;top:665px;width:66px;height:19px;background:#e7f0ec;"><span class="num" style="color:#1e1e1e;"></span></div>
<div style="position:absolute;left:1212px;top:665px;width:66px;height:19px;"><span class="num" style="color:#587066;"></span></div>
<div style="position:absolute;left:1279px;top:665px;width:66px;height:19px;background:#e7f0ec;"><span class="num" style="color:#1e1e1e;"></span></div>
<div style="position:absolute;left:1346px;top:665px;width:66px;height:19px;"><span class="num" style="color:#587066;"></span></div>
<div style="position:absolute;left:1413px;top:665px;width:66px;height:19px;background:#e7f0ec;"><span class="num" style="color:#1e1e1e;"></span></div>
<div style="position:absolute;left:74px;top:685px;width:197px;height:19px;background:#eeeeee;"><span class="lbl" style="">Sparsity Rate</span></div>
<div style="position:absolute;left:272px;top:685px;width:66px;height:19px;"><span class="num" style="color:#1e1e1e;letter-spacing:0.85px;right:-1px;">£56,300.…</span></div>
<div style="position:absolute;left:339px;top:685px;width:66px;height:19px;background:#d3e3d8;"><span class="num" style="color:#1e1e1e;"></span></div>
<div style="position:absolute;left:406px;top:685px;width:67px;height:19px;"><span class="num" style="color:#1e1e1e;letter-spacing:0.85px;right:-1px;">£57,100.…</span></div>
<div style="position:absolute;left:474px;top:685px;width:66px;height:19px;background:#d3e3d8;"><span class="num" style="color:#1e1e1e;"></span></div>
<div style="position:absolute;left:541px;top:685px;width:67px;height:19px;"><span class="num" style="color:#1e1e1e;letter-spacing:0.85px;right:-1px;">£57,400.…</span></div>
<div style="position:absolute;left:609px;top:685px;width:66px;height:19px;background:#d3e3d8;"><span class="num" style="color:#1e1e1e;"></span></div>
<div style="position:absolute;left:676px;top:685px;width:66px;height:19px;"><span class="num" style="color:#1e1e1e;letter-spacing:0.85px;right:-1px;">£58,600.…</span></div>
<div style="position:absolute;left:743px;top:685px;width:66px;height:19px;background:#d3e3d8;"><span class="num" style="color:#1e1e1e;"></span></div>
<div style="position:absolute;left:810px;top:685px;width:66px;height:19px;"><span class="num" style="color:#587066;letter-spacing:0.85px;right:-1px;">£58,600.…</span></div>
<div style="position:absolute;left:877px;top:685px;width:66px;height:19px;background:#d3e3d8;"><span class="num" style="color:#1e1e1e;"></span></div>
<div style="position:absolute;left:944px;top:685px;width:66px;height:19px;"><span class="num" style="color:#587066;letter-spacing:0.85px;right:-1px;">£58,600.…</span></div>
<div style="position:absolute;left:1011px;top:685px;width:66px;height:19px;background:#d3e3d8;"><span class="num" style="color:#1e1e1e;"></span></div>
<div style="position:absolute;left:1078px;top:685px;width:66px;height:19px;"><span class="num" style="color:#587066;letter-spacing:0.85px;right:-1px;">£58,600.…</span></div>
<div style="position:absolute;left:1145px;top:685px;width:66px;height:19px;background:#d3e3d8;"><span class="num" style="color:#1e1e1e;"></span></div>
<div style="position:absolute;left:1212px;top:685px;width:66px;height:19px;"><span class="num" style="color:#587066;letter-spacing:0.85px;right:-1px;">£58,600.…</span></div>
<div style="position:absolute;left:1279px;top:685px;width:66px;height:19px;background:#d3e3d8;"><span class="num" style="color:#1e1e1e;"></span></div>
<div style="position:absolute;left:1346px;top:685px;width:66px;height:19px;"><span class="num" style="color:#587066;letter-spacing:0.85px;right:-1px;">£58,600.…</span></div>
<div style="position:absolute;left:1413px;top:685px;width:66px;height:19px;background:#d3e3d8;"><span class="num" style="color:#1e1e1e;"></span></div>
<div style="position:absolute;left:74px;top:705px;width:197px;height:19px;background:#f4f4f4;"><span class="lbl" style="">Lump Sum Rate</span></div>
<div style="position:absolute;left:272px;top:705px;width:66px;height:19px;"><span class="num" style="color:#1e1e1e;letter-spacing:0.55px;right:-0.5px;">£128,000…</span></div>
<div style="position:absolute;left:339px;top:705px;width:66px;height:19px;background:#e7f0ec;"><span class="num" style="color:#1e1e1e;"></span></div>
<div style="position:absolute;left:406px;top:705px;width:67px;height:19px;"><span class="num" style="color:#1e1e1e;letter-spacing:0.55px;right:-0.5px;">£139,606…</span></div>
<div style="position:absolute;left:474px;top:705px;width:66px;height:19px;background:#e7f0ec;"><span class="num" style="color:#1e1e1e;letter-spacing:0.55px;right:-0.5px;">£134,400…</span></div>
<div style="position:absolute;left:541px;top:705px;width:67px;height:19px;"><span class="num" style="color:#1e1e1e;letter-spacing:0.2px;right:0px;">£145,100.…</span></div>
<div style="position:absolute;left:609px;top:705px;width:66px;height:19px;background:#e7f0ec;"><span class="num" style="color:#1e1e1e;"></span></div>
<div style="position:absolute;left:676px;top:705px;width:66px;height:19px;"><span class="num" style="color:#1e1e1e;letter-spacing:0.55px;right:-0.5px;">£152,700…</span></div>
<div style="position:absolute;left:743px;top:705px;width:66px;height:19px;background:#e7f0ec;"><span class="num" style="color:#1e1e1e;"></span></div>
<div style="position:absolute;left:810px;top:705px;width:66px;height:19px;"><span class="num" style="color:#587066;letter-spacing:0.55px;right:-0.5px;">£152,700…</span></div>
<div style="position:absolute;left:877px;top:705px;width:66px;height:19px;background:#e7f0ec;"><span class="num" style="color:#1e1e1e;"></span></div>
<div style="position:absolute;left:944px;top:705px;width:66px;height:19px;"><span class="num" style="color:#587066;letter-spacing:0.55px;right:-0.5px;">£152,700…</span></div>
<div style="position:absolute;left:1011px;top:705px;width:66px;height:19px;background:#e7f0ec;"><span class="num" style="color:#1e1e1e;"></span></div>
<div style="position:absolute;left:1078px;top:705px;width:66px;height:19px;"><span class="num" style="color:#587066;letter-spacing:0.55px;right:-0.5px;">£152,700…</span></div>
<div style="position:absolute;left:1145px;top:705px;width:66px;height:19px;background:#e7f0ec;"><span class="num" style="color:#1e1e1e;"></span></div>
<div style="position:absolute;left:1212px;top:705px;width:66px;height:19px;"><span class="num" style="color:#587066;letter-spacing:0.55px;right:-0.5px;">£152,700…</span></div>
<div style="position:absolute;left:1279px;top:705px;width:66px;height:19px;background:#e7f0ec;"><span class="num" style="color:#1e1e1e;"></span></div>
<div style="position:absolute;left:1346px;top:705px;width:66px;height:19px;"><span class="num" style="color:#587066;letter-spacing:0.55px;right:-0.5px;">£152,700…</span></div>
<div style="position:absolute;left:1413px;top:705px;width:66px;height:19px;background:#e7f0ec;"><span class="num" style="color:#1e1e1e;"></span></div>
<div style="position:absolute;left:74px;top:725px;width:197px;height:19px;background:#eeeeee;"><span class="lbl" style="">Split Sites Rate</span></div>
<div style="position:absolute;left:272px;top:725px;width:66px;height:19px;"><span class="num" style="color:#1e1e1e;">£0.00</span></div>
<div style="position:absolute;left:339px;top:725px;width:66px;height:19px;background:#d3e3d8;"><span class="num" style="color:#1e1e1e;"></span></div>
<div style="position:absolute;left:406px;top:725px;width:67px;height:19px;"><span class="num" style="color:#1e1e1e;">£0.00</span></div>
<div style="position:absolute;left:474px;top:725px;width:66px;height:19px;background:#d3e3d8;"><span class="num" style="color:#1e1e1e;"></span></div>
<div style="position:absolute;left:541px;top:725px;width:67px;height:19px;"><span class="num" style="color:#587066;">£0.00</span></div>
<div style="position:absolute;left:609px;top:725px;width:66px;height:19px;background:#d3e3d8;"><span class="num" style="color:#1e1e1e;"></span></div>
<div style="position:absolute;left:676px;top:725px;width:66px;height:19px;"><span class="num" style="color:#1e1e1e;letter-spacing:0.85px;right:-1px;">£82,700.…</span></div>
<div style="position:absolute;left:743px;top:725px;width:66px;height:19px;background:#d3e3d8;"><span class="num" style="color:#1e1e1e;"></span></div>
<div style="position:absolute;left:810px;top:725px;width:66px;height:19px;"><span class="num" style="color:#587066;letter-spacing:0.85px;right:-1px;">£82,700.…</span></div>
<div style="position:absolute;left:877px;top:725px;width:66px;height:19px;background:#d3e3d8;"><span class="num" style="color:#1e1e1e;"></span></div>
<div style="position:absolute;left:944px;top:725px;width:66px;height:19px;"><span class="num" style="color:#587066;letter-spacing:0.85px;right:-1px;">£82,700.…</span></div>
<div style="position:absolute;left:1011px;top:725px;width:66px;height:19px;background:#d3e3d8;"><span class="num" style="color:#1e1e1e;"></span></div>
<div style="position:absolute;left:1078px;top:725px;width:66px;height:19px;"><span class="num" style="color:#587066;letter-spacing:0.85px;right:-1px;">£82,700.…</span></div>
<div style="position:absolute;left:1145px;top:725px;width:66px;height:19px;background:#d3e3d8;"><span class="num" style="color:#1e1e1e;"></span></div>
<div style="position:absolute;left:1212px;top:725px;width:66px;height:19px;"><span class="num" style="color:#587066;letter-spacing:0.85px;right:-1px;">£82,700.…</span></div>
<div style="position:absolute;left:1279px;top:725px;width:66px;height:19px;background:#d3e3d8;"><span class="num" style="color:#1e1e1e;"></span></div>
<div style="position:absolute;left:1346px;top:725px;width:66px;height:19px;"><span class="num" style="color:#587066;letter-spacing:0.85px;right:-1px;">£82,700.…</span></div>
<div style="position:absolute;left:1413px;top:725px;width:66px;height:19px;background:#d3e3d8;"><span class="num" style="color:#1e1e1e;"></span></div>
<div style="position:absolute;left:74px;top:745px;width:197px;height:19px;background:#f4f4f4;"><span class="lbl" style="">Private Finance Initiative Rate</span></div>
<div style="position:absolute;left:272px;top:745px;width:66px;height:19px;"><span class="num" style="color:#1e1e1e;">£0.00</span></div>
<div style="position:absolute;left:339px;top:745px;width:66px;height:19px;background:#e7f0ec;"><span class="num" style="color:#1e1e1e;"></span></div>
<div style="position:absolute;left:406px;top:745px;width:67px;height:19px;"><span class="num" style="color:#1e1e1e;">£0.00</span></div>
<div style="position:absolute;left:474px;top:745px;width:66px;height:19px;background:#e7f0ec;"><span class="num" style="color:#1e1e1e;"></span></div>
<div style="position:absolute;left:541px;top:745px;width:67px;height:19px;"><span class="num" style="color:#587066;">£0.00</span></div>
<div style="position:absolute;left:609px;top:745px;width:66px;height:19px;background:#e7f0ec;"><span class="num" style="color:#1e1e1e;"></span></div>
<div style="position:absolute;left:676px;top:745px;width:66px;height:19px;"><span class="num" style="color:#587066;">£0.00</span></div>
<div style="position:absolute;left:743px;top:745px;width:66px;height:19px;background:#e7f0ec;"><span class="num" style="color:#1e1e1e;"></span></div>
<div style="position:absolute;left:810px;top:745px;width:66px;height:19px;"><span class="num" style="color:#587066;">£0.00</span></div>
<div style="position:absolute;left:877px;top:745px;width:66px;height:19px;background:#e7f0ec;"><span class="num" style="color:#1e1e1e;"></span></div>
<div style="position:absolute;left:944px;top:745px;width:66px;height:19px;"><span class="num" style="color:#587066;">£0.00</span></div>
<div style="position:absolute;left:1011px;top:745px;width:66px;height:19px;background:#e7f0ec;"><span class="num" style="color:#1e1e1e;"></span></div>
<div style="position:absolute;left:1078px;top:745px;width:66px;height:19px;"><span class="num" style="color:#587066;">£0.00</span></div>
<div style="position:absolute;left:1145px;top:745px;width:66px;height:19px;background:#e7f0ec;"><span class="num" style="color:#1e1e1e;"></span></div>
<div style="position:absolute;left:1212px;top:745px;width:66px;height:19px;"><span class="num" style="color:#587066;">£0.00</span></div>
<div style="position:absolute;left:1279px;top:745px;width:66px;height:19px;background:#e7f0ec;"><span class="num" style="color:#1e1e1e;"></span></div>
<div style="position:absolute;left:1346px;top:745px;width:66px;height:19px;"><span class="num" style="color:#587066;">£0.00</span></div>
<div style="position:absolute;left:1413px;top:745px;width:66px;height:19px;background:#e7f0ec;"><span class="num" style="color:#1e1e1e;"></span></div>
<div style="position:absolute;left:74px;top:765px;width:197px;height:19px;background:#eeeeee;"><span class="lbl" style="">London Fringe Rate</span></div>
<div style="position:absolute;left:272px;top:765px;width:66px;height:19px;"><span class="num" style="color:#1e1e1e;">£0.00</span></div>
<div style="position:absolute;left:339px;top:765px;width:66px;height:19px;background:#d3e3d8;"><span class="num" style="color:#1e1e1e;"></span></div>
<div style="position:absolute;left:406px;top:765px;width:67px;height:19px;"><span class="num" style="color:#1e1e1e;">£0.00</span></div>
<div style="position:absolute;left:474px;top:765px;width:66px;height:19px;background:#d3e3d8;"><span class="num" style="color:#1e1e1e;"></span></div>
<div style="position:absolute;left:541px;top:765px;width:67px;height:19px;"><span class="num" style="color:#587066;">£0.00</span></div>
<div style="position:absolute;left:609px;top:765px;width:66px;height:19px;background:#d3e3d8;"><span class="num" style="color:#1e1e1e;"></span></div>
<div style="position:absolute;left:676px;top:765px;width:66px;height:19px;"><span class="num" style="color:#587066;">£0.00</span></div>
<div style="position:absolute;left:743px;top:765px;width:66px;height:19px;background:#d3e3d8;"><span class="num" style="color:#1e1e1e;"></span></div>
<div style="position:absolute;left:810px;top:765px;width:66px;height:19px;"><span class="num" style="color:#587066;">£0.00</span></div>
<div style="position:absolute;left:877px;top:765px;width:66px;height:19px;background:#d3e3d8;"><span class="num" style="color:#1e1e1e;"></span></div>
<div style="position:absolute;left:944px;top:765px;width:66px;height:19px;"><span class="num" style="color:#587066;">£0.00</span></div>
<div style="position:absolute;left:1011px;top:765px;width:66px;height:19px;background:#d3e3d8;"><span class="num" style="color:#1e1e1e;"></span></div>
<div style="position:absolute;left:1078px;top:765px;width:66px;height:19px;"><span class="num" style="color:#587066;">£0.00</span></div>
<div style="position:absolute;left:1145px;top:765px;width:66px;height:19px;background:#d3e3d8;"><span class="num" style="color:#1e1e1e;"></span></div>
<div style="position:absolute;left:1212px;top:765px;width:66px;height:19px;"><span class="num" style="color:#587066;">£0.00</span></div>
<div style="position:absolute;left:1279px;top:765px;width:66px;height:19px;background:#d3e3d8;"><span class="num" style="color:#1e1e1e;"></span></div>
<div style="position:absolute;left:1346px;top:765px;width:66px;height:19px;"><span class="num" style="color:#587066;">£0.00</span></div>
<div style="position:absolute;left:1413px;top:765px;width:66px;height:19px;background:#d3e3d8;"><span class="num" style="color:#1e1e1e;"></span></div>

<!-- scrollbar -->
<div class="abs" style="left:1480px;top:384px;width:16px;height:400px;background:#efefef;"></div>
<div class="abs" style="left:1480px;top:384px;width:16px;height:31px;background:#b8c5bd;"></div>
<div class="abs" style="left:1480px;top:415px;width:16px;height:191px;background:#c2c9c8;"></div>
<div class="abs" style="left:1480px;top:753px;width:16px;height:31px;background:#b8c5bd;"></div>
<svg class="abs" style="left:1480px;top:384px" width="16" height="31" viewBox="0 0 16 31"><rect x="3" y="2.5" width="10" height="1.5" fill="#435b57"/><path d="M3 11H13L8 4.2Z" fill="#435b57"/><path d="M3 26H13L8 19.5Z" fill="#435b57"/></svg>
<svg class="abs" style="left:1480px;top:753px" width="16" height="31" viewBox="0 0 16 31"><path d="M3 5.5H13L8 12Z" fill="#435b57"/><path d="M3 19.5H13L8 25.8Z" fill="#435b57"/><rect x="3" y="26.2" width="10" height="1.5" fill="#435b57"/></svg>

<!-- cursor -->
<svg class="abs" style="left:683px;top:823px" width="14" height="9" viewBox="0 0 14 9"><path d="M1.2 1.2V17L5 13.2L8 19L10 18L7.2 12.2H12.2Z" fill="#fff" stroke="#1a1a22" stroke-width="1.1" stroke-linejoin="miter"/></svg>
</body></html>
